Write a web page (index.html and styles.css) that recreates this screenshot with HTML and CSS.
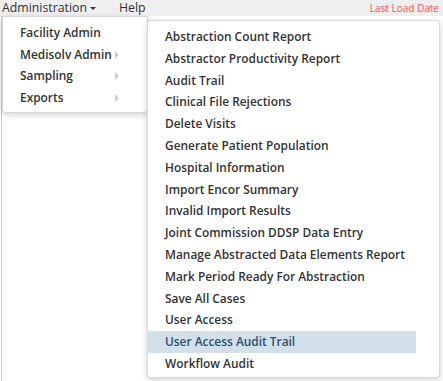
FILE: index.html
```html
<!DOCTYPE html>
<html>
<head>
<meta charset="utf-8">
<link rel="stylesheet" href="styles.css">
</head>
<body>
<div class="topbar">
  <div class="nav">
    <span class="nav-item">Administration<span class="caret"></span></span>
    <span class="nav-item help">Help</span>
  </div>
  <span class="lastload">Last Load Date</span>
</div>
<div class="page">
  <div class="content"></div>
  <ul class="menu menu-main">
    <li>Facility Admin</li>
    <li class="sub">Medisolv Admin</li>
    <li class="sub">Sampling</li>
    <li class="sub">Exports</li>
  </ul>
  <ul class="menu menu-sub">
    <li>Abstraction Count Report</li>
    <li>Abstractor Productivity Report</li>
    <li>Audit Trail</li>
    <li>Clinical File Rejections</li>
    <li>Delete Visits</li>
    <li>Generate Patient Population</li>
    <li>Hospital Information</li>
    <li>Import Encor Summary</li>
    <li>Invalid Import Results</li>
    <li>Joint Commission DDSP Data Entry</li>
    <li>Manage Abstracted Data Elements Report</li>
    <li>Mark Period Ready For Abstraction</li>
    <li>Save All Cases</li>
    <li>User Access</li>
    <li class="active"><span>User Access Audit Trail</span></li>
    <li>Workflow Audit</li>
  </ul>
</div>
</body>
</html>
```
FILE: styles.css
```css
* { box-sizing: border-box; }
html, body { margin: 0; padding: 0; }
body {
  width: 443px;
  height: 381px;
  overflow: hidden;
  background: #fff;
  font-family: "Open Sans", sans-serif;
  color: #333;
}
.topbar {
  height: 16px;
  background: #efefef;
  display: flex;
  justify-content: space-between;
  align-items: center;
  padding: 0 4px 0 2px;
}
.nav { display: flex; gap: 23px; align-items: center; }
.nav-item {
  font-size: 12.3px;
  line-height: 16px;
  color: #333;
  display: inline-flex;
  align-items: center;
}
.caret {
  display: inline-block;
  width: 0; height: 0;
  margin-left: 3px;
  border-left: 3px solid transparent;
  border-right: 3px solid transparent;
  border-top: 3px solid #333;
}
.lastload {
  font-size: 10px;
  color: #ff4f4f;
  line-height: 16px;
}
.page {
  position: relative;
  height: 365px;
}
.content {
  height: 100%;
  margin-left: 1px;
  border-left: 1px solid #ccc;
}
.menu {
  list-style: none;
  margin: 0;
  background: #fff;
  border: 1px solid rgba(0,0,0,0.15);
  border-radius: 4px;
  box-shadow: 0 2px 6px rgba(0,0,0,0.18);
  font-size: 11.9px;
  font-weight: 600;
  color: #333;
}
.menu li {
  height: 21.8px;
  line-height: 21.8px;
  white-space: nowrap;
}
.menu-main {
  position: absolute;
  left: 2px;
  top: 0;
  width: 146px;
  padding: 5px 0 4px;
  border-top-left-radius: 0;
  border-top-right-radius: 0;
  z-index: 1;
}
.menu-main li { padding-left: 17px; height: 21.6px; line-height: 21.6px; position: relative; }
.menu-main li.sub::after {
  content: "";
  position: absolute;
  left: 112px;
  top: 7px;
  border-top: 4px solid transparent;
  border-bottom: 4px solid transparent;
  border-left: 4px solid #ccc;
}
.menu-sub {
  position: absolute;
  left: 147px;
  top: 4px;
  width: 293px;
  height: 358px;
  padding: 5px 0 0;
  z-index: 2;
}
.menu-sub li { padding-left: 17px; }
.menu-sub li.active {
  padding-left: 0;
}
.menu-sub li.active span {
  display: block;
  width: 268px;
  padding-left: 17px;
  background: #d3e0e9;
  color: #2c5070;
}
```
